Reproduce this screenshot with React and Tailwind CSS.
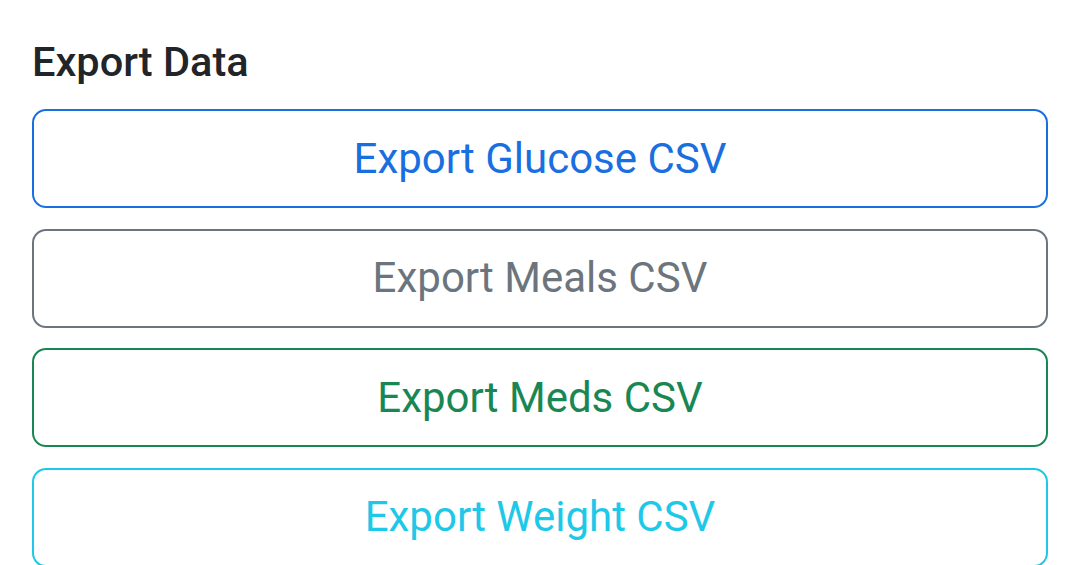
export default function App() {
  const buttons = [
    { label: 'Export Glucose CSV', cls: 'border-[#1a6fe0] text-[#1a6fe0]' },
    { label: 'Export Meals CSV', cls: 'border-[#6c757d] text-[#6c757d]' },
    { label: 'Export Meds CSV', cls: 'border-[#198754] text-[#198754]' },
    { label: 'Export Weight CSV', cls: 'border-[#1ec8e8] text-[#1ec8e8]' },
  ];

  return (
    <div className="w-[1080px] h-[565px] overflow-hidden bg-white px-[32px] pt-[38px]" style={{ fontFamily: 'Roboto, "Liberation Sans", sans-serif' }}>
      <h5 className="text-[41.5px] leading-[48px] font-medium text-[#212529] mb-[23px]">Export Data</h5>
      <div className="flex flex-col gap-[20.6px]">
        {buttons.map((b) => (
          <button
            key={b.label}
            className={`w-full h-[99px] border-2 rounded-[14px] bg-white text-[42px] leading-none ${b.cls}`}
          >
            {b.label}
          </button>
        ))}
      </div>
    </div>
  );
}
